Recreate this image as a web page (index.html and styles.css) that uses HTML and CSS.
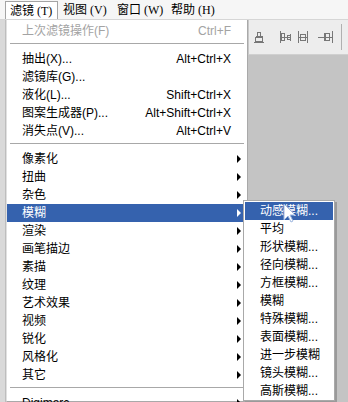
FILE: index.html
```html
<!DOCTYPE html>
<html lang="zh-CN">
<head>
  <meta charset="UTF-8" />
  <title>滤镜菜单</title>
  <link rel="stylesheet" href="styles.css">
</head>
<body>
  <div class="menubar">
    <span class="top open">滤镜<u>(T)</u></span>
    <span class="top">视图<u>(V)</u></span>
    <span class="top">窗口<u>(W)</u></span>
    <span class="top">帮助<u>(H)</u></span>
  </div>

  <div class="workspace">
    <div class="strip"></div>

    <div class="menu">
      <div class="item disabled"><span>上次滤镜操作(F)</span><span class="key">Ctrl+F</span></div>
      <div class="sep"></div>
      <div class="item"><span>抽出(X)...</span><span class="key">Alt+Ctrl+X</span></div>
      <div class="item"><span>滤镜库(G)...</span></div>
      <div class="item"><span>液化(L)...</span><span class="key">Shift+Ctrl+X</span></div>
      <div class="item"><span>图案生成器(P)...</span><span class="key">Alt+Shift+Ctrl+X</span></div>
      <div class="item"><span>消失点(V)...</span><span class="key">Alt+Ctrl+V</span></div>
      <div class="sep"></div>
      <div class="item"><span>像素化</span><i class="arrow"></i></div>
      <div class="item"><span>扭曲</span><i class="arrow"></i></div>
      <div class="item"><span>杂色</span><i class="arrow"></i></div>
      <div class="item active"><span>模糊</span><i class="arrow"></i></div>
      <div class="item"><span>渲染</span><i class="arrow"></i></div>
      <div class="item"><span>画笔描边</span><i class="arrow"></i></div>
      <div class="item"><span>素描</span><i class="arrow"></i></div>
      <div class="item"><span>纹理</span><i class="arrow"></i></div>
      <div class="item"><span>艺术效果</span><i class="arrow"></i></div>
      <div class="item"><span>视频</span><i class="arrow"></i></div>
      <div class="item"><span>锐化</span><i class="arrow"></i></div>
      <div class="item"><span>风格化</span><i class="arrow"></i></div>
      <div class="item"><span>其它</span><i class="arrow"></i></div>
      <div class="sep"></div>
      <div class="item"><span>Digimarc</span><i class="arrow"></i></div>
    </div>

    <div class="side">
      <div class="toolbar">
        <svg class="tools" width="90" height="14" viewBox="0 0 90 14">
          <g fill="none" stroke="#777" stroke-width="1">
            <path d="M4 2.5h3M2 6.5h7M0 12.5h10"/>
            <rect x="3.5" y="2.5" width="3" height="4"/>
            <rect x="1.5" y="7.5" width="7" height="4"/>
            <path d="M26.5 1v12M36.5 4v7M26 7.5h11"/>
            <rect x="27.5" y="3.5" width="3" height="7"/>
            <rect x="33.5" y="5.5" width="3" height="4"/>
            <path d="M44.5 1v12M53.5 1v12M44 7.5h10"/>
            <rect x="46.5" y="4.5" width="5" height="6"/>
            <path d="M70.5 3v8M78.5 1v12M64 7.5h15"/>
            <rect x="71.5" y="3.5" width="4" height="7"/>
          </g>
        </svg>
      </div>
      <div class="canvas"></div>
    </div>

    <div class="submenu">
      <div class="item active"><span>动感模糊...</span></div>
      <div class="item"><span>平均</span></div>
      <div class="item"><span>形状模糊...</span></div>
      <div class="item"><span>径向模糊...</span></div>
      <div class="item"><span>方框模糊...</span></div>
      <div class="item"><span>模糊</span></div>
      <div class="item"><span>特殊模糊...</span></div>
      <div class="item"><span>表面模糊...</span></div>
      <div class="item"><span>进一步模糊</span></div>
      <div class="item"><span>镜头模糊...</span></div>
      <div class="item"><span>高斯模糊...</span></div>
    </div>

    <svg class="cursor" width="14" height="20" viewBox="0 0 14 20">
      <path d="M1 1 L1 17 L5 13 L8 19 L10 18 L7 12 L12 12 Z" fill="#fff" stroke="#9fb8e0" stroke-width="1"/>
    </svg>
  </div>
</body>
</html>
```

FILE: styles.css
```css
body {
  margin: 0;
  width: 348px;
  height: 402px;
  overflow: hidden;
  background: #c4c4c4;
  font-family: "Liberation Sans", "Noto Sans CJK SC", sans-serif;
  font-size: 12px;
  color: #000;
}

.menubar {
  height: 20px;
  background: #f6f6f6;
  display: flex;
  align-items: stretch;
  padding-left: 5px;
  box-sizing: border-box;
  border-bottom: 1px solid #d6d6d6;
}

.top {
  display: flex;
  align-items: center;
  width: 54px;
  flex: none;
  box-sizing: border-box;
  padding-left: 5px;
  white-space: nowrap;
  line-height: 18px;
}

.top u {
  font-family: "Liberation Serif", serif;
  font-size: 12px;
  margin-left: 3px;
  text-decoration: none;
}

.top.open {
  background: #fff;
  border: 1px solid #a4a4a4;
  border-bottom: none;
  width: 53px;
  margin-top: 1px;
  padding-left: 4px;
}

.workspace {
  position: relative;
  display: flex;
  height: 382px;
}

.strip {
  width: 5px;
  background: #d9d9d9;
  border-right: 1px solid #bdbdbd;
}

.menu {
  width: 242px;
  box-sizing: border-box;
  background: #fff;
  border: 1px solid #a9a9a9;
  border-left-color: #e0e0e0;
  border-top: none;
  padding-top: 2px;
}

.item {
  height: 18px;
  line-height: 18px;
  display: flex;
  align-items: center;
  justify-content: space-between;
  padding: 0 3px 0 15px;
  margin-right: 3px;
  white-space: nowrap;
}

.item.disabled {
  color: #a3a3a3;
}

.item.active {
  background: #3562ae;
  color: #fff;
}

.key {
  padding-right: 10px;
}

.arrow {
  width: 0;
  height: 0;
  border-left: 4px solid #000;
  border-top: 4px solid transparent;
  border-bottom: 4px solid transparent;
}

.item.active .arrow {
  border-left-color: #fff;
}

.sep {
  height: 1px;
  margin: 3px 3px 5px 3px;
  background: #a8a8a8;
  border-bottom: 1px solid #fff;
}

.side {
  flex: 1;
  display: flex;
  flex-direction: column;
}

.toolbar {
  height: 35px;
  background: #ededed;
  border-left: 1px solid #c8c8c8;
  border-bottom: 1px solid #d0d0d0;
  box-sizing: border-box;
  display: flex;
  align-items: center;
  padding-left: 5px;
  position: relative;
}

.toolbar::after {
  content: "";
  position: absolute;
  left: 92px;
  top: 4px;
  bottom: 4px;
  width: 1px;
  background: #b0b0b0;
}

.tools {
  display: block;
}

.canvas {
  flex: 1;
  background: #c4c4c4;
}

.submenu {
  position: absolute;
  left: 243px;
  top: 180px;
  width: 92px;
  box-sizing: border-box;
  background: #fff;
  border: 1px solid #a9a9a9;
  padding-top: 1px;
  box-shadow: 2px 2px 0 #9a9a9a;
}

.submenu .item {
  padding-left: 15px;
  margin: 0 1px;
}

.cursor {
  position: absolute;
  left: 283px;
  top: 183px;
}
```
